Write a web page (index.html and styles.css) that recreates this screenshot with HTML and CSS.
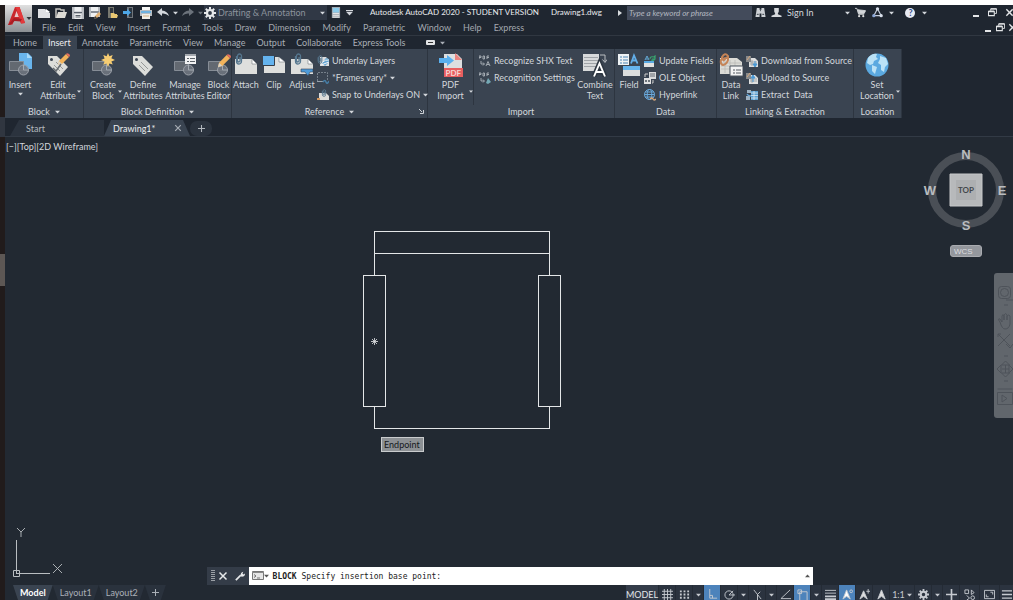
FILE: index.html
```html
<!DOCTYPE html>
<html lang="en">
<head>
<meta charset="utf-8">
<title>Autodesk AutoCAD 2020 - STUDENT VERSION Drawing1.dwg</title>
<link rel="stylesheet" href="styles.css">
</head>
<body>
<svg class="defs" aria-hidden="true">
  <symbol id="down" viewBox="0 0 6 4"><path d="M0 .5h6L3 3.8z" fill="currentColor"/></symbol>
  <symbol id="gear" viewBox="0 0 12 12"><g stroke="currentColor" fill="none"><circle cx="6" cy="6" r="3" stroke-width="2.2"/><path d="M6 0v2.5M6 9.500v2.500M0 6h2.500M9.500 6h2.500M1.800 1.800l1.800 1.800M8.400 8.400l1.800 1.800M10.200 1.800L8.400 3.600M3.600 8.400l-1.800 1.800" stroke-width="2"/></g></symbol>
  <symbol id="new" viewBox="0 0 12 12"><path d="M0 2h7l5 4v5H0z" fill="#dfe1e4"/><path d="M8 2v3h4z" fill="#fff"/></symbol>
  <symbol id="open" viewBox="0 0 12 12"><path d="M1 11V2h4l1 1h3v2" fill="none" stroke="#c9c8c2" stroke-width="1.500"/><path d="M3 5h9l-2 6H1z" fill="#dddcd6"/></symbol>
  <symbol id="save" viewBox="0 0 12 12"><path d="M0 0h12v12H0z" fill="#b9bdc2"/><path d="M2.500 0h7v4.500h-7zM2.500 7h7v5h-7z" fill="#eef0f1"/><path d="M2 5.500h8M3.500 8.500h5M3.500 10h5" stroke="#59616b"/></symbol>
  <symbol id="saveas" viewBox="0 0 12 12"><path d="M0 0h11v10H0z" fill="#b9bdc2"/><path d="M2 0h7v4H2zM2 6h6v4H2z" fill="#eef0f1"/><path d="M2 5h8" stroke="#59616b"/><path d="M5 12l1-3 4-4 2 2-4 4z" fill="#e3b273"/><path d="M5 12l1-3 2 2z" fill="#343a42"/></symbol>
  <symbol id="openweb" viewBox="0 0 12 12"><path d="M2 0h6v11H2z" fill="#77786f"/><path d="M4 1h3v5H4z" fill="#2e343c"/><path d="M5 11V6h3l1 1h2v1h1l-1 3z" fill="#e8c772"/></symbol>
  <symbol id="saveweb" viewBox="0 0 12 12"><path d="M4 0h6v11H4z" fill="#72777c"/><path d="M6 1h3v9H6z" fill="#2a3541"/><path d="M0 4h4V2l4 3.500L4 9V7H0z" fill="#4da7e8"/></symbol>
  <symbol id="print" viewBox="0 0 12 12"><path d="M2 0h8v4H2z" fill="#f6f6f4"/><path d="M0 3h12v6H0z" fill="#b8bdc2"/><path d="M1 4h10v2H1z" fill="#6eb2e0"/><path d="M2 7h8v5H2z" fill="#f1eee7"/><path d="M3 9h6" stroke="#d5b282"/></symbol>
  <symbol id="undo" viewBox="0 0 12 12"><path d="M5 1L0 5l5 4V6.500q4-.5 7 2.500Q10.500 4 5 3.500z" fill="currentColor"/></symbol>
  <symbol id="device" viewBox="0 0 12 12"><path d="M2 0h9v12H2z" fill="#a2a8af"/><path d="M3 1h7v5H3z" fill="#8bcbea"/><path d="M3 7h7M3 9h7M3 11h7" stroke="#f1f1f1"/></symbol>
  <symbol id="binoc" viewBox="0 0 12 12"><path d="M2 1h3v2h2V1h3l1.500 10H7V7H5v4H.5z" fill="#cdd1d5"/><path d="M5.500 4h1M2 8h2M8 8h2" stroke="#27303a"/></symbol>
  <symbol id="person" viewBox="0 0 12 12"><path d="M3.500 1h5v4L7.500 7v1l4 1.500V11H.5V9.500l4-1.500V7l-1-2z" fill="#d6d9dc"/></symbol>
  <symbol id="cart" viewBox="0 0 12 12"><path d="M0 1.500h2l2 6.500h6" fill="none" stroke="#d2d5d8"/><path d="M3 3l8.500 1L10 7H4z" fill="#d2d5d8" stroke="#d2d5d8"/><circle cx="4.500" cy="10" r="1.200" fill="#ddd"/><circle cx="9" cy="10" r="1.200" fill="#ddd"/></symbol>
  <symbol id="tri" viewBox="0 0 12 12"><path d="M6 2l4 7.500H2z" fill="none" stroke="#c4ccda" stroke-width="1.300"/><circle cx="6" cy="2" r="1.800" fill="#d8deea"/><circle cx="2" cy="9.500" r="1.800" fill="#89a4d5"/><circle cx="10" cy="9.500" r="1.800" fill="#d8deea"/></symbol>
  <symbol id="restore" viewBox="0 0 10 10"><path d="M3 3V1h6.500v5H7.500" fill="none" stroke="currentColor"/><path d="M.5 4h6.500v4.500H.5zM.5 3.500h6.500M3 1h6.500" fill="none" stroke="currentColor" stroke-width="1.200"/></symbol>
  <symbol id="cross" viewBox="0 0 10 10"><path d="M1.500 1.500l7 7m0-7l-7 7" stroke="currentColor" stroke-width="1.500"/></symbol>
  <symbol id="plus" viewBox="0 0 10 10"><path d="M5 0v10M0 5h10" stroke="currentColor" stroke-width="1.500"/></symbol>
  <symbol id="blockbase" viewBox="0 0 24 24"><path d="M1.500 8.500h14v9h-14z" fill="#636971" stroke="#868d96"/><circle cx="15.500" cy="17" r="5" fill="#727881" fill-opacity=".85" stroke="#9aa0a8"/><path d="M15.500 17v-5M15.500 17h5" stroke="#a5abb2"/></symbol>
  <symbol id="pencil" viewBox="0 0 12 12"><path d="M0 12l1-4 7-7 3 3-7 7z" fill="#f2b35b"/><path d="M8 1q1-1.500 3 0t0 3z" fill="#e46d5c"/><path d="M0 12l1-4 3 3z" fill="#d9d5ca"/></symbol>
  <symbol id="tag" viewBox="0 0 24 24"><path d="M2 3l9 0 11 11-8 9L2 11z" fill="#dcddda"/><circle cx="5.500" cy="6.500" r="1.500" fill="#3a4451"/><path d="M10 9l7 7M8 12l6 6" stroke="#969998"/></symbol>
  <symbol id="clipmark" viewBox="0 0 8 12"><path d="M1.500 3v5a2 2.500 0 0 0 5 0V3a2 2 0 0 0-4 0v5q1.500 2 2.500 0V4" fill="none" stroke="#56778f" stroke-width="1.300"/></symbol>
  <symbol id="sheet" viewBox="0 0 24 24"><path d="M1 6h17l5 5v10H1z" fill="#dedfdd"/><path d="M18 6v5h5z" fill="#fff" stroke="#59616b" stroke-width=".5"/></symbol>
  <symbol id="i-insert" viewBox="0 0 24 24"><path d="M11 0h9l4 4v12H11z" fill="#69b5ed"/><path d="M19 0v5h5z" fill="#a9daf8"/><use href="#blockbase"/></symbol>
  <symbol id="i-editattr" viewBox="0 0 24 24"><use href="#tag"/><use href="#pencil" x="12" y="0" width="12" height="12"/><path d="M7 15l3 3 5-7" fill="none" stroke="#666c71" stroke-width="1.500"/></symbol>
  <symbol id="i-create" viewBox="0 0 24 24"><use href="#blockbase"/><path d="M17 0l1.400 3.200 3.300-1.300-1.300 3.300L24 7l-3.600 1.600 1.300 3-3.300-1.200L17 14l-1.400-3.600-3.300 1.300 1.300-3.100L10 7l3.600-1.600-1.300-3.300 3.300 1.100z" fill="#f7cd72"/></symbol>
  <symbol id="i-manage" viewBox="0 0 24 24"><use href="#blockbase"/><path d="M12 1h11v10H12z" fill="#f1f2f3"/><path d="M12 2h11" stroke="#a4a9af" stroke-width="2"/><path d="M14 5.500h2M17 5.500h5M14 8.500h2M17 8.500h5" stroke="#5b6268"/></symbol>
  <symbol id="i-editor" viewBox="0 0 24 24"><use href="#blockbase"/><use href="#pencil" x="11" y="1" width="13" height="13"/></symbol>
  <symbol id="i-attach" viewBox="0 0 24 24"><use href="#sheet"/><use href="#clipmark" x="1" y="0" width="8" height="12"/></symbol>
  <symbol id="i-clip" viewBox="0 0 24 24"><path d="M2 4h15l6 5v11H2z" fill="#dedfdd"/><path d="M17 4v5h6z" fill="#fff" stroke="#59616b" stroke-width=".5"/><path d="M1 3h11v9H1z" fill="#64b3ee"/><path d="M1 12.500h11.500V3" fill="none" stroke="#363e48"/></symbol>
  <symbol id="i-adjust" viewBox="0 0 24 24"><use href="#sheet"/><use href="#clipmark" x="4" y="0" width="8" height="12"/><path d="M11 16h12v3h-3l-2 4-3-4h-4z" fill="#4e9bd9" stroke="#354150" stroke-width=".6"/></symbol>
  <symbol id="i-pdf" viewBox="0 0 24 24"><path d="M5 1h13l5 5v17H5z" fill="#dddfe0"/><path d="M16 0v7h7z" fill="#e9847f"/><path d="M5 15h19v9H5z" fill="#e85f60"/><path d="M0 5h8V2l7 5.500L8 13v-3H0z" fill="#5ab0ef"/><text x="6.500" y="22.500" font-size="8" font-weight="700" fill="#f5d6d4">PDF</text></symbol>
  <symbol id="i-combine" viewBox="0 0 24 24"><path d="M0 1h16v17H0z" fill="#d8dadb"/><path d="M1 4.500h14M1 7.500h14M1 10.500h14M1 13.500h12" stroke="#a0a4a8"/><path d="M17 2h5v7M19.500 6.500l2.500 3 2-3" fill="none" stroke="#b9bdc1"/><path d="M11 23.500l5.500-13 5.500 13M13 19h7" fill="none" stroke="#2e3742" stroke-width="5"/><path d="M11 23.500l5.500-13 5.500 13M13 19h7" fill="none" stroke="#fff" stroke-width="1.900"/></symbol>
  <symbol id="i-field" viewBox="0 0 24 24"><path d="M1 1h11v11H1z" fill="#eef2f4"/><path d="M3 4h2M6 4h5M3 7h2M6 7h5M3 10h2M6 10h5" stroke="#4a84b5"/><path d="M14 10.500l3-8 3.500 8M15 7.500h4.500" fill="none" stroke="#62aee8" stroke-width="1.800"/><path d="M6 13h17v4H6z" fill="#66b4ed"/><path d="M6 17h17v6H6z" fill="#dcdedd"/></symbol>
  <symbol id="i-datalink" viewBox="0 0 24 24"><path d="M1 5h17l5 4v12H1z" fill="#dcdcd7"/><path d="M2 10h20M2 13h20M2 16h20M6 7v13M11 7v13M16 7v13" stroke="#b4b5b2" stroke-width=".7"/><path d="M4 8l4-4M3 7V4q3-5 6-1v4q-1 4-5 5-3-1-2-5l4-2" fill="none" stroke="#c58457" stroke-width="2"/><path d="M11 13h13v10H11z" fill="#f3f3f3" stroke="#4f5660"/><path d="M14 17h2M17 17h5M14 20h2M17 20h5" stroke="#555b62"/></symbol>
  <symbol id="i-globe" viewBox="0 0 24 24"><circle cx="12" cy="12" r="11.500" fill="#5ba9e0"/><path d="M3 5q4-5 9-4l-1 3 2 2-4 2-1 3-3 1-3-2zM7 12l5 2-2 7-3-3zM15 3l6 2 2 6-3 3-1 5-3-2 0-5-3-2 2-4z" fill="#bbe2f6"/></symbol>
  <symbol id="s-layers" viewBox="0 0 12 12"><path d="M3 2h6l3 3v6H3z" fill="#dcddde"/><path d="M5 8l4-5 3 1v3L8 11z" fill="#64a5d2"/><path d="M4 8q5-4 8-3M4 10l8-3" fill="none" stroke="#f0f3f5"/><use href="#clipmark" width="6" height="9"/></symbol>
  <symbol id="s-frames" viewBox="0 0 12 12"><path d="M.5 9V.5h10V8" fill="none" stroke="#76808b" stroke-dasharray="2 1"/><path d="M0 9.500h6" stroke="#96a0a9"/><path d="M6 10q2-3 3 0t3-1" fill="none" stroke="#467da5" stroke-width="1.500"/></symbol>
  <symbol id="s-snap" viewBox="0 0 12 12"><path d="M2 4h7l3 3v4H2z" fill="#dcdcd9"/><use href="#clipmark" x="4" y="0" width="6" height="8"/><path d="M0 10h3" stroke="#d49a62" stroke-width="2"/></symbol>
  <symbol id="s-shx" viewBox="0 0 12 12"><path d="M0 4V1h2v1.500H0M4 1v3h1.500V1zM8 4V1h2M8 2.500h2M2 6v3h3M4 7.500L5.500 9 4 10.500M7 11l2-4.500 2 4.500M8 9.500h2" fill="none" stroke="#aeb4bb" stroke-width=".9"/></symbol>
  <symbol id="s-shxset" viewBox="0 0 12 12"><path d="M0 4V1h2v1.500H0M4 1v3h1.500V1zM8 4V1h2M8 2.500h2M2 6v3h3M4 7.500L5.500 9 4 10.500" fill="none" stroke="#aeb4bb" stroke-width=".9"/><path d="M7 11l2-5 3 4-3 2z" fill="#75a9b5"/></symbol>
  <symbol id="s-update" viewBox="0 0 12 12"><path d="M1 5l2-4 2 4M2 4h2" fill="none" stroke="#65a9d6"/><path d="M6 4q0-3 4-2l1-1v3H8M11 4q-1 2-4 1" fill="none" stroke="#39a56f" stroke-width="1.200"/><path d="M0 6h10v2H0z" fill="#58a9e2"/><path d="M0 8h10v4H0z" fill="#e1e2e1"/></symbol>
  <symbol id="s-ole" viewBox="0 0 12 12"><path d="M5 0h7v7H5z" fill="#d9dbdc"/><path d="M6 2h5M6 4h5" stroke="#666d75"/><path d="M1 5V2h3" fill="none" stroke="#ccc"/><path d="M0 6h7v6H0z" fill="#e1e2e2"/><path d="M1 8h2v2H1zM4 8h2v2H4z" fill="#6d747b"/><path d="M9 8v3H8" stroke="#ccc" fill="none"/></symbol>
  <symbol id="s-hyper" viewBox="0 0 12 12"><g fill="none" stroke="#69a8db"><circle cx="5.500" cy="5.500" r="5"/><ellipse cx="5.500" cy="5.500" rx="2.300" ry="5"/><path d="M.5 5.500h10M1 3h9M1 8h9"/></g><path d="M6 10q2-2 3 0t3 0" fill="none" stroke="#d5a67b" stroke-width="1.500"/></symbol>
  <symbol id="s-dl" viewBox="0 0 12 12"><path d="M3 3h6l3 3v6H3z" fill="#dedfdf"/><path d="M4 7h7M4 9h7M6 5v6" stroke="#8d9297" stroke-width=".7"/><path d="M0 1h5v6H0z" fill="#87898b"/><path d="M1 5l3-4" stroke="#d5a57a"/><path d="M9 6v4M7 9l2 3 2-3z" stroke="#4998d5" fill="#4998d5"/></symbol>
  <symbol id="s-ul" viewBox="0 0 12 12"><path d="M3 3h6l3 3v6H3z" fill="#dedfdf"/><path d="M4 7h7M4 9h7M6 5v6" stroke="#8d9297" stroke-width=".7"/><path d="M0 1h5v6H0z" fill="#87898b"/><path d="M1 5l3-4" stroke="#d5a57a"/><path d="M7 6v4M5 6l2-3 2 3z" stroke="#4998d5" fill="#4998d5"/></symbol>
  <symbol id="s-extract" viewBox="0 0 12 12"><path d="M1 1h4v3H1zM0 7h4v4H0z" fill="#9fb3c4"/><path d="M5 2h7v9H5z" fill="#5a9ed0"/><path d="M5 4h7M5 6.500h7M5 9h7M8 2v9" stroke="#dce9f2" stroke-width=".8"/><path d="M1 5q1 2 4 2" stroke="#63a9df" fill="none" stroke-width="1.500"/></symbol>
</svg>

<div class="desktop">
 <aside class="edge"><span class="edge-a"></span><span class="edge-b"></span></aside>
 <div class="app">
  <header class="head">
   <button class="logo" aria-label="Application menu">
    <svg viewBox="0 0 27 27"><path d="M3 20L10 2h4.500L20 18l-4 .5-1.500-4H9.500L7.500 19.500z" fill="#c9282c"/><path d="M11.500 6l-2 6h4.500z" fill="#e8c9c8"/><path d="M10 2h4.500L20 18l-4 .5L11.500 4z" fill="#e3393b"/><path d="M3 20l6-7 8 1-1.500 2.500-6-.5-3.500 3.500z" fill="#a91d24"/><path d="M21.500 12h5L24 15z" fill="#30353b"/></svg>
   </button>
   <div class="title">
    <nav class="quick" aria-label="Quick access">
     <button aria-label="New"><svg><use href="#new"/></svg></button>
     <button aria-label="Open"><svg><use href="#open"/></svg></button>
     <button aria-label="Save"><svg><use href="#save"/></svg></button>
     <button aria-label="Save as"><svg><use href="#saveas"/></svg></button>
     <button aria-label="Open from web"><svg><use href="#openweb"/></svg></button>
     <button aria-label="Save to web"><svg><use href="#saveweb"/></svg></button>
     <button aria-label="Plot"><svg><use href="#print"/></svg></button>
     <button aria-label="Undo"><svg><use href="#undo"/></svg></button>
     <button class="caret" aria-label="Undo list"><svg><use href="#down"/></svg></button>
     <button class="dim flip" aria-label="Redo"><svg><use href="#undo"/></svg></button>
     <button class="caret dim" aria-label="Redo list"><svg><use href="#down"/></svg></button>
    </nav>
    <label class="workspace"><svg class="ws-gear"><use href="#gear"/></svg>
     <select aria-label="Workspace"><option>Drafting &amp; Annotation</option></select>
     <svg class="down"><use href="#down"/></svg></label>
    <button class="tb" aria-label="Device"><svg><use href="#device"/></svg></button>
    <button class="caret more" aria-label="Customize"><svg><use href="#down"/></svg></button>
    <h1>Autodesk AutoCAD 2020 - STUDENT VERSION<span>Drawing1.dwg</span></h1>
    <svg class="play" viewBox="0 0 4 6"><path d="M0 0l4 3-4 3z" fill="#d9dcdf"/></svg>
    <input class="search" type="text" placeholder="Type a keyword or phrase" aria-label="Search">
    <button class="tb" aria-label="Find"><svg><use href="#binoc"/></svg></button>
    <button class="sign"><svg><use href="#person"/></svg>Sign In<svg class="down"><use href="#down"/></svg></button>
    <button class="tb" aria-label="Store"><svg><use href="#cart"/></svg></button>
    <button class="tb" aria-label="Apps"><svg><use href="#tri"/></svg></button>
    <button class="caret" aria-label="Apps list"><svg><use href="#down"/></svg></button>
    <button class="help" aria-label="Help"><span>?</span></button>
    <button class="caret" aria-label="Help list"><svg><use href="#down"/></svg></button>
    <div class="win"><button aria-label="Minimize"><i></i></button><button aria-label="Restore"><svg><use href="#restore"/></svg></button><button aria-label="Close"><svg><use href="#cross"/></svg></button></div>
   </div>
   <nav class="menu" aria-label="Menu bar">
    <button>File</button><button>Edit</button><button>View</button><button>Insert</button><button>Format</button><button>Tools</button><button>Draw</button><button>Dimension</button><button>Modify</button><button>Parametric</button><button>Window</button><button>Help</button><button>Express</button>
    <div class="win doc"><button aria-label="Minimize drawing"><i></i></button><button aria-label="Restore drawing"><svg><use href="#restore"/></svg></button><button aria-label="Close drawing"><svg><use href="#cross"/></svg></button></div>
   </nav>
  </header>
  <nav class="tabs" aria-label="Ribbon tabs">
   <button>Home</button><button class="on">Insert</button><button>Annotate</button><button>Parametric</button><button>View</button><button>Manage</button><button>Output</button><button>Collaborate</button><button>Express Tools</button>
   <button class="cam" aria-label="Ribbon display"><span></span><svg class="down"><use href="#down"/></svg></button>
  </nav>

  <section class="ribbon">
   <div class="panel p-block">
    <div class="tools">
     <button class="tool w30"><svg><use href="#i-insert"/></svg><span>Insert</span><svg class="down"><use href="#down"/></svg></button>
     <button class="tool w46"><svg><use href="#i-editattr"/></svg><span>Edit<br>Attribute</span><svg class="down side"><use href="#down"/></svg></button>
    </div>
    <button class="name">Block<svg class="down"><use href="#down"/></svg></button>
   </div>
   <div class="panel p-def">
    <div class="tools">
     <button class="tool w38"><svg><use href="#i-create"/></svg><span>Create<br>Block</span><svg class="down side"><use href="#down"/></svg></button>
     <button class="tool w42"><svg><use href="#tag"/></svg><span>Define<br>Attributes</span></button>
     <button class="tool w42"><svg><use href="#i-manage"/></svg><span>Manage<br>Attributes</span></button>
     <button class="tool w25"><svg><use href="#i-editor"/></svg><span>Block<br>Editor</span></button>
    </div>
    <button class="name">Block Definition<svg class="down"><use href="#down"/></svg></button>
   </div>
   <div class="panel p-ref">
    <div class="tools">
     <button class="tool w28"><svg><use href="#i-attach"/></svg><span>Attach</span></button>
     <button class="tool w28"><svg><use href="#i-clip"/></svg><span>Clip</span></button>
     <button class="tool w28"><svg><use href="#i-adjust"/></svg><span>Adjust</span></button>
     <div class="rows">
      <button><svg><use href="#s-layers"/></svg>Underlay Layers</button>
      <button><svg><use href="#s-frames"/></svg>*Frames vary*<svg class="down"><use href="#down"/></svg></button>
      <button><svg><use href="#s-snap"/></svg>Snap to Underlays ON<svg class="down"><use href="#down"/></svg></button>
     </div>
    </div>
    <div class="name">Reference<svg class="down"><use href="#down"/></svg>
     <button class="launch" aria-label="Reference settings"><svg viewBox="0 0 5 5"><path d="M0 0l3 3M4.500 1v3.500H1" fill="none" stroke="#cdd1d6"/></svg></button></div>
   </div>
   <div class="panel p-import">
    <div class="tools">
     <button class="tool w46 split"><svg><use href="#i-pdf"/></svg><span>PDF<br>Import</span><svg class="down side"><use href="#down"/></svg></button>
     <div class="rows grow">
      <button><svg><use href="#s-shx"/></svg>Recognize SHX Text</button>
      <button><svg><use href="#s-shxset"/></svg>Recognition Settings</button>
     </div>
     <button class="tool w38"><svg><use href="#i-combine"/></svg><span>Combine<br>Text</span></button>
    </div>
    <div class="name">Import</div>
   </div>
   <div class="panel p-data">
    <div class="tools">
     <button class="tool w28"><svg><use href="#i-field"/></svg><span>Field</span></button>
     <div class="rows">
      <button><svg><use href="#s-update"/></svg>Update Fields</button>
      <button><svg><use href="#s-ole"/></svg>OLE Object</button>
      <button><svg><use href="#s-hyper"/></svg>Hyperlink</button>
     </div>
    </div>
    <div class="name">Data</div>
   </div>
   <div class="panel p-link">
    <div class="tools">
     <button class="tool w28"><svg><use href="#i-datalink"/></svg><span>Data<br>Link</span></button>
     <div class="rows">
      <button><svg><use href="#s-dl"/></svg>Download from Source</button>
      <button><svg><use href="#s-ul"/></svg>Upload to Source</button>
      <button><svg><use href="#s-extract"/></svg>Extract&nbsp; Data</button>
     </div>
    </div>
    <div class="name">Linking &amp; Extraction</div>
   </div>
   <div class="panel p-loc">
    <div class="tools">
     <button class="tool w46"><svg><use href="#i-globe"/></svg><span>Set<br>Location</span><svg class="down side"><use href="#down"/></svg></button>
    </div>
    <div class="name">Location</div>
   </div>
  </section>

  <nav class="files" aria-label="Drawings">
   <button class="file">Start</button>
   <div class="file on"><button>Drawing1*</button><button class="x" aria-label="Close Drawing1"><svg><use href="#cross"/></svg></button></div>
   <button class="add" aria-label="New drawing"><svg><use href="#plus"/></svg></button>
  </nav>

  <main class="canvas">
   <div class="viewctl"><button>[−]</button><button>[Top]</button><button>[2D Wireframe]</button></div>
   <svg class="chair" viewBox="0 0 200 200" role="img" aria-label="Chair drawing">
    <g fill="none" stroke="#e4e6e8" shape-rendering="crispEdges"><path d="M12.500 44.500V1.500h175v43M12.500 23.500h175M12.500 176.500v22h175v-22"/><path d="M1.500 45.500h22v131h-22zM176.500 45.500h22v131h-22z"/></g>
    <path d="M12.500 108v7M9 111.500h7M10 109l5 5m0-5l-5 5" stroke="#e4e6e8" stroke-width=".8"/>
   </svg>
   <div class="tip">Endpoint</div>
   <svg class="ucs" viewBox="0 0 60 56"><g fill="none" stroke="#b9bdc1"><path d="M5.500 14v34M5.500 47.500H39M2.500 44.500h6v6h-6z"/><path d="M6 2l4 4 4-4M10 6v5M42 38l9 9m0-9l-9 9" stroke-width=".9"/></g></svg>
   <div class="cube">
    <svg viewBox="0 0 86 86"><circle cx="43" cy="43" r="34" fill="none" stroke="#4a4f56" stroke-width="8"/><path d="M27 27h32v32H27z" fill="#b7b9bb" stroke="#c6c8c9"/><path d="M33 33h20v20H33z" fill="#adafb1"/>
     <g class="dirs"><text x="43" y="12">N</text><text x="43" y="83">S</text><text x="7" y="48">W</text><text x="79" y="48">E</text></g><text class="top" x="43" y="46">TOP</text></svg>
    <button class="wcs">WCS</button>
   </div>
   <svg class="nav" viewBox="0 0 19 145"><path d="M3 0h16v145H3q-3 0-3-3V3q0-3 3-3z" fill="#61666c"/><g fill="none" stroke="#4e535a"><rect x="4.500" y="13.500" width="12" height="12" rx="3"/><circle cx="10.500" cy="19.500" r="4"/><path d="M12 27h7M10 32h4M6 49q-3-4 0-3l2 3v-6q1-3 2 0v4-5q2-3 3 0v5-4q2-2 3 0v8q-1 5-5 5-3 0-5-7M4 61l12 12M16 61L4 73M4 64v-3h3M12 71l4 4 3-4M10 83h4M11.500 88l4 4h-8zM11.500 104l4-4h-8zM3 96l4-4v8zM19 96l-4-4v8zM8 96h7M11.500 92v8M10 108h4M3.500 116h15M3.500 119.500h15v12h-15z"/><path d="M8 122l5 3.500-5 3.500z"/></g></svg>
   <form class="command">
    <span class="grip"></span>
    <button type="button" aria-label="Close command line"><svg><use href="#cross"/></svg></button>
    <button type="button" aria-label="Customize"><svg viewBox="0 0 12 12"><path d="M1 11l6-6" stroke="#e7e9eb" stroke-width="2"/><path d="M7 6q-1-4 3-5L9 3l1 1.200L12 3q0 4-4 4z" fill="#e7e9eb"/></svg></button>
    <div class="line">
     <svg class="prompt" viewBox="0 0 12 10"><path d="M.5.500h11v8H.5z" fill="#e6e6e6" stroke="#777"/><path d="M0 1.500h12" stroke="#888"/><path d="M2 3.500l2 1.500-2 1.500M5 7h3" fill="none" stroke="#555" stroke-width=".8"/></svg>
     <svg class="down"><use href="#down"/></svg>
     <label for="cmd"><b>BLOCK</b> Specify insertion base point:</label><input id="cmd" type="text">
     <svg class="down up"><use href="#down"/></svg>
    </div>
   </form>
  </main>

  <footer class="foot">
   <nav class="layouts" aria-label="Layouts"><button class="on">Model</button><button>Layout1</button><button>Layout2</button><button class="add" aria-label="New layout"><svg><use href="#plus"/></svg></button></nav>
   <div class="status">
    <button class="model">MODEL</button>
    <button aria-label="Grid"><svg viewBox="0 0 12 12"><path d="M0 2.500h12M0 6h12M0 9.500h12M2.500 0v12M6 0v12M9.500 0v12"/></svg></button>
    <button aria-label="Snap"><svg viewBox="0 0 12 12"><path d="M1 2.500h10M1 6h10M1 9.500h10" stroke-width="2" stroke-dasharray="2 2"/></svg></button>
    <button class="caret" aria-label="Snap list"><svg><use href="#down"/></svg></button>
    <button class="on" aria-label="Ortho"><svg viewBox="0 0 12 12"><path d="M3 0v10h8M3 7h3v3"/></svg></button>
    <button aria-label="Polar"><svg viewBox="0 0 12 12"><circle cx="5.500" cy="6.500" r="4.500"/><path d="M5.500 6.500H12M5.500 6.500L10 2"/></svg></button>
    <button class="caret" aria-label="Polar list"><svg><use href="#down"/></svg></button>
    <button aria-label="Isodraft"><svg viewBox="0 0 12 12"><path d="M2 1l8 10M6 6v6M6 6l3-3"/></svg></button>
    <button class="caret" aria-label="Isodraft list"><svg><use href="#down"/></svg></button>
    <button aria-label="Tracking"><svg viewBox="0 0 12 12"><path d="M11 1L1 10.500h11"/></svg></button>
    <button class="on" aria-label="Object snap"><svg viewBox="0 0 12 12"><path d="M3 12V3h8v9M1 1h4v4H1z"/></svg></button>
    <button class="caret" aria-label="Object snap list"><svg><use href="#down"/></svg></button>
    <button aria-label="Lineweight"><svg viewBox="0 0 12 12"><path d="M0 1.500h12M0 4.500h12"/><path d="M0 8h12M0 11h12" stroke-width="2"/></svg></button>
    <button class="on" aria-label="Annotation visibility"><svg viewBox="0 0 12 12"><path d="M5 1l4 10-4-3-4 3z" fill="#fff"/><circle cx="10" cy="2.500" r="1.500"/></svg></button>
    <button aria-label="Auto scale"><svg viewBox="0 0 12 12"><path d="M5 2l4 9-4-3-4 3z" fill="#ddd"/><path d="M10 0v5M8 2.500h4"/></svg></button>
    <button aria-label="Annotation scale"><svg viewBox="0 0 12 12"><path d="M6 1l4 10-4-3-4 3z" fill="#ddd"/></svg></button>
    <button class="scale">1:1<svg class="down"><use href="#down"/></svg></button>
    <button aria-label="Settings"><svg><use href="#gear"/></svg></button>
    <button class="caret" aria-label="Settings list"><svg><use href="#down"/></svg></button>
    <button aria-label="Annotation monitor"><svg><use href="#plus"/></svg></button>
    <button aria-label="Isolate objects" class="wide"><svg viewBox="0 0 12 12"><path d="M1 1h4v4H1zM8 1l3 3-3 2zM3 7l3 3-3 2"/><circle cx="9.500" cy="9.500" r="2"/></svg></button>
    <button aria-label="Clean screen" class="wide"><svg viewBox="0 0 12 12"><path d="M.5 1.500h11v9H.5zM7 3.500h2.500V6M5 8.500H2.500V6"/></svg></button>
    <button aria-label="Customization" class="last"><svg viewBox="0 0 12 12"><path d="M1 2h11M1 6h11M1 10h11" stroke-width="1.500"/></svg></button>
   </div>
  </footer>
 </div>
</div>
</body>
</html>
```
FILE: styles.css
```css
* { box-sizing: border-box; }
html, body { height: 100%; margin: 0; }
body { background: #222932; font: 9px/11px Lato, "Open Sans", sans-serif; color: #d3d7dc; overflow: hidden; }
button, input, select { font: inherit; color: inherit; background: none; border: 0; padding: 0; margin: 0; }
button { display: flex; align-items: center; justify-content: center; white-space: nowrap; }
svg { display: block; flex: none; width: 12px; height: 12px; }
.defs { position: absolute; width: 0; height: 0; }
svg.down { width: 5px; height: 4px; }

.desktop { display: flex; min-height: 100vh; border-top: 5px solid #fff; }
.edge { display: flex; flex-direction: column; width: 5px; background: #211b1b; }
.edge-a { height: 20px; margin-top: 112px; background: #303640; }
.edge-b { height: 32px; margin-top: 117px; background: #5d5754; }
.app { flex: 1; min-width: 0; display: flex; flex-direction: column; background: #1f2630; }

.head { display: grid; grid-template-columns: 27px 1fr; grid-template-rows: 15px 15px; border-bottom: 1px solid #303741; }
.logo { grid-row: span 2; height: 27px; background: linear-gradient(#e0e0e0, #8b8f93); }
.logo svg { width: 27px; height: 27px; }
.title { display: flex; align-items: center; min-width: 0; }
.quick { display: flex; align-items: center; padding-left: 3px; }
.quick button, .tb { width: 17px; height: 15px; }
.quick svg { width: 12px; height: 12px; }
button.caret, .quick button.caret { width: 11px; }
.caret svg, .quick .caret svg { width: 5px; height: 4px; }
.quick .caret { margin: 0 -2px 0 -1px; }
.dim { color: #6b727b; }
.flip svg { transform: scaleX(-1); }
.workspace { display: flex; align-items: center; gap: 2px; width: 123px; height: 15px; padding: 0 2px 0 0; background: #303845; }
.workspace select { flex: 1; min-width: 0; appearance: none; color: #8b929c; }
.ws-gear { color: #e7e9eb; }
.tb svg { width: 11px; height: 11px; }
.caret.more svg { width: 7px; border-top: 1px solid #d3d7dc; height: 6px; }
h1 { flex: none; display: flex; gap: 12px; margin: 0 16px 0 15px; font-size: 8px; font-weight: 400; color: #e9ebee; white-space: nowrap; }
.play { width: 4px; height: 6px; margin-right: 5px; }
.search { flex: 0 1 125px; min-width: 0; height: 14px; padding: 0 2px; background: #434b5b; font-size: 8px; font-style: italic; }
.search::placeholder { color: #b3b8c0; opacity: 1; }
.sign { width: 83px; justify-content: flex-start; gap: 5px; padding-left: 2px; }
.sign svg { width: 11px; height: 11px; }
.sign svg.down { width: 5px; height: 4px; margin-left: auto; margin-right: 2px; }
.help { width: 17px; margin-left: 5px; }
.help span { width: 10px; height: 10px; border-radius: 50%; background: #e7eaf2; color: #2f4c8e; font-weight: 700; line-height: 10px; }
.win { display: flex; margin-left: auto; margin-right: -5px; color: #e3e5e7; }
.win button { width: 17px; height: 14px; }
.win svg { width: 9px; height: 9px; }
.win i { width: 6px; height: 2px; margin-top: 6px; background: currentColor; }
.menu { display: flex; align-items: center; gap: 12px; padding-left: 10px; color: #a3a8af; }
.win.doc button { width: 12px; }

.tabs { display: flex; height: 13px; padding-left: 3px; color: #a9aeb6; }
.tabs button { padding: 0 6px 0 5px; }
.tabs .on { background: #3a4451; color: #eceef0; }
.tabs .cam { gap: 5px; margin-left: 10px; }
.cam span { width: 9px; height: 5px; border: 2px solid #e2e4e6; border-radius: 1px; background: #333; }

.ribbon { display: flex; align-self: flex-start; background: #3a4451; }
.panel { display: flex; flex-direction: column; border-right: 1px solid #2d3540; }
.p-block { width: 79px; } .p-def { width: 148px; } .p-ref { width: 196px; } .p-import { width: 187px; }
.p-data { width: 102px; } .p-link { width: 137px; } .p-loc { width: 48px; }
.tools { display: flex; height: 56px; }
.tool { position: relative; flex: none; flex-direction: column; justify-content: flex-start; padding-top: 4px; }
.tool > svg:first-child { width: 24px; height: 24px; margin-bottom: 2px; }
.tool .down { margin-top: 2px; }
.tool .side { position: absolute; right: 0; bottom: 12px; width: 4px; height: 3px; }
.w25 { width: 25px; } .w28 { width: 28px; } .w30 { width: 30px; } .w38 { width: 38px; } .w42 { width: 42px; } .w46 { width: 46px; }
.split { border-right: 1px solid #2d3540; }
.rows { display: flex; flex-direction: column; padding: 3px 0 0 1px; }
.rows.grow { flex: 1; padding-left: 5px; }
.rows button { height: 17px; gap: 3px; justify-content: flex-start; }
.name { position: relative; display: flex; justify-content: center; align-items: center; gap: 5px; height: 13px; }
.launch { position: absolute; right: 3px; top: 4px; }
.launch svg { width: 5px; height: 5px; }

.files { display: flex; align-items: flex-end; height: 19px; padding-left: 5px; border-bottom: 1px solid #323a45; color: #b2b7bd; }
.file { display: flex; align-items: center; justify-content: flex-start; width: 94px; height: 16px; padding-left: 16px; background: #2b333e; clip-path: polygon(9px 0, 100% 0, 100% 100%, 0 100%); }
.file.on { width: 86px; padding: 0 8px 0 9px; justify-content: space-between; background: #3a4451; color: #eceef0; clip-path: polygon(7px 0, 79px 0, 100% 100%, 0 100%); }
.file .x svg { width: 8px; height: 8px; color: #a5abb2; }
.files .add { width: 22px; height: 15px; background: #2b333e; border-radius: 7px; }
.add svg { width: 7px; height: 7px; }

.canvas { position: relative; flex: 1; background: #222932; overflow: hidden; }
.viewctl { display: flex; padding: 4px 1px; }
.chair { position: absolute; left: 357px; top: 93px; width: 200px; height: 200px; }
.tip { position: absolute; left: 376px; top: 300px; padding: 1px 3px 1px 2px; border: 1px solid #c9cbcd; background: #8c9094; color: #14181c; }
.ucs { position: absolute; left: 6px; bottom: 3px; width: 60px; height: 56px; }
.cube { position: absolute; right: 4px; top: 10px; display: flex; flex-direction: column; align-items: center; gap: 12px; }
.cube svg { width: 86px; height: 86px; overflow: visible; }
.dirs { font: 700 13px "Liberation Sans", sans-serif; fill: #b9bcbf; text-anchor: middle; }
.top { font: 700 8px Lato, sans-serif; fill: #43474b; text-anchor: middle; }
.wcs { width: 32px; height: 12px; padding-left: 3px; justify-content: flex-start; border: 1px solid #a9abb0; border-radius: 3px; background: #94979d; color: #dcdde0; font: 8px "Liberation Sans", sans-serif; }
.nav { position: absolute; right: 0; top: 136px; width: 19px; height: 145px; }
.command { position: absolute; left: 20%; right: 200px; bottom: 0; display: flex; height: 18px; background: #343c48; color: #e7e9eb; }
.command > button { width: 17px; }
.command > button svg { width: 10px; height: 10px; }
.grip { width: 4px; margin: 3px 0 3px 4px; background: repeating-linear-gradient(#9ba0a6 0 1px, transparent 1px 2px); }
.line { flex: 1; display: flex; align-items: center; padding: 0 3px; background: #fff; color: #222; font: 8px/11px "DejaVu Sans Mono", monospace; white-space: nowrap; }
.line .prompt { width: 12px; height: 10px; }
.line .down { color: #555; margin-right: 4px; }
.line input { flex: 1; min-width: 0; outline: 0; }
.line .up { transform: rotate(180deg); margin: 0; }

.foot { display: flex; justify-content: space-between; height: 15px; background: #222932; }
.layouts { display: flex; align-items: stretch; padding-left: 8px; color: #aab0b7; }
.layouts button { padding: 0 7px; background: #2a323d; clip-path: polygon(0 0, 100% 0, calc(100% - 5px) 100%, 5px 100%); }
.layouts .on { background: #3a4451; color: #fff; font-weight: 700; }
.status { display: flex; background: #2b333f; color: #c6cad0; }
.status button { width: 17px; padding-top: 4px; border-right: 1px solid #242b35; }
.status button.caret { width: 11px; }
.status button.model { width: 33px; background: #343c49; color: #e3e6e9; }
.status button.scale { width: 25px; gap: 2px; }
.status button.wide { width: 20px; }
.status button.last { width: 13px; border: 0; }
.status svg { width: 11px; height: 11px; fill: none; stroke: currentColor; }
.status .caret svg, .status svg.down { width: 5px; height: 4px; stroke: none; }
.status .on { background: #4d83bb; }
```
